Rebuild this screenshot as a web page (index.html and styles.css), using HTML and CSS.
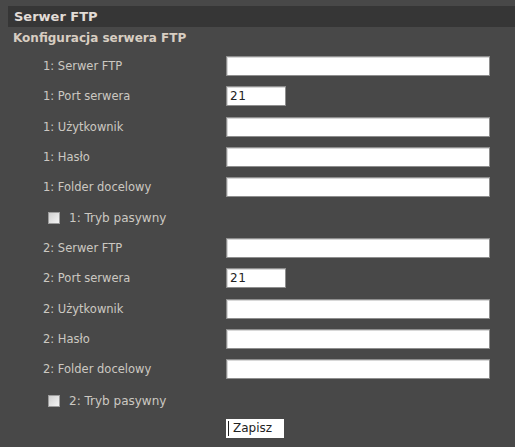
FILE: index.html
```html
<!DOCTYPE html>
<html>
<head>
<meta charset="utf-8">
<link rel="stylesheet" href="styles.css">
</head>
<body>
<div class="page">
  <div class="header">Serwer FTP</div>
  <div class="section">Konfiguracja serwera FTP</div>
  <div class="form">
    <div class="row"><span class="label">1: Serwer FTP</span><span class="input wide"></span></div>
    <div class="row"><span class="label">1: Port serwera</span><span class="input short">21</span></div>
    <div class="row"><span class="label">1: Użytkownik</span><span class="input wide"></span></div>
    <div class="row"><span class="label">1: Hasło</span><span class="input wide"></span></div>
    <div class="row"><span class="label">1: Folder docelowy</span><span class="input wide"></span></div>
    <div class="row check"><span class="box"></span><span class="label">1: Tryb pasywny</span></div>
    <div class="row"><span class="label">2: Serwer FTP</span><span class="input wide"></span></div>
    <div class="row"><span class="label">2: Port serwera</span><span class="input short">21</span></div>
    <div class="row"><span class="label">2: Użytkownik</span><span class="input wide"></span></div>
    <div class="row"><span class="label">2: Hasło</span><span class="input wide"></span></div>
    <div class="row"><span class="label">2: Folder docelowy</span><span class="input wide"></span></div>
    <div class="row check last"><span class="box"></span><span class="label">2: Tryb pasywny</span></div>
    <div class="row btnrow"><span class="button">Zapisz</span></div>
  </div>
</div>
</body>
</html>
```
FILE: styles.css
```css
html, body {
  margin: 0;
  padding: 0;
  background: #484848;
  width: 515px;
  height: 447px;
  overflow: hidden;
  font-family: "DejaVu Sans", Verdana, sans-serif;
}
.page {
  padding-top: 6px;
  padding-left: 8px;
  border-left: 4px solid #4e4e4e;
  margin-left: -4px;
}
.header {
  height: 21px;
  line-height: 21px;
  background: #363636;
  color: #e2dcd6;
  font-weight: bold;
  font-size: 13px;
  padding-left: 6px;
}
.section {
  height: 22px;
  line-height: 22px;
  color: #d8cec2;
  font-weight: bold;
  font-size: 12px;
  padding-left: 5px;
}
.form {
  padding-top: 2px;
}
.row {
  display: flex;
  align-items: center;
  height: 30.3px;
}
.label {
  width: 183px;
  padding-left: 35px;
  color: #ccc8c2;
  font-size: 11.5px;
}
.input {
  box-sizing: border-box;
  height: 20px;
  background: #fff;
  border: 1px solid #8e8e8e;
  box-shadow: inset 1px 1px 0 #d8d8d8;
  font-size: 12px;
  color: #222;
  line-height: 18px;
  padding-left: 3px;
  letter-spacing: 0.5px;
}
.wide { width: 264px; }
.short { width: 60px; }
.check .label {
  width: auto;
  padding-left: 9px;
  font-size: 12px;
}
.box {
  margin-left: 40px;
  width: 12px;
  height: 12px;
  box-sizing: border-box;
  border: 1px solid #9c9c9c;
  background: linear-gradient(135deg, #d0d0d0, #f4f4f4);
}
.last { height: 31px; margin-top: 1px; }
.btnrow { padding-left: 218px; height: 25px; }
.button {
  box-sizing: border-box;
  height: 19px;
  width: 58px;
  background: #fff;
  font-size: 12px;
  color: #222;
  line-height: 19px;
  padding-left: 7px;
  position: relative;
}
.button::before {
  content: "";
  position: absolute;
  left: 2px;
  top: 2px;
  height: 15px;
  width: 1px;
  background: #222;
}
```
